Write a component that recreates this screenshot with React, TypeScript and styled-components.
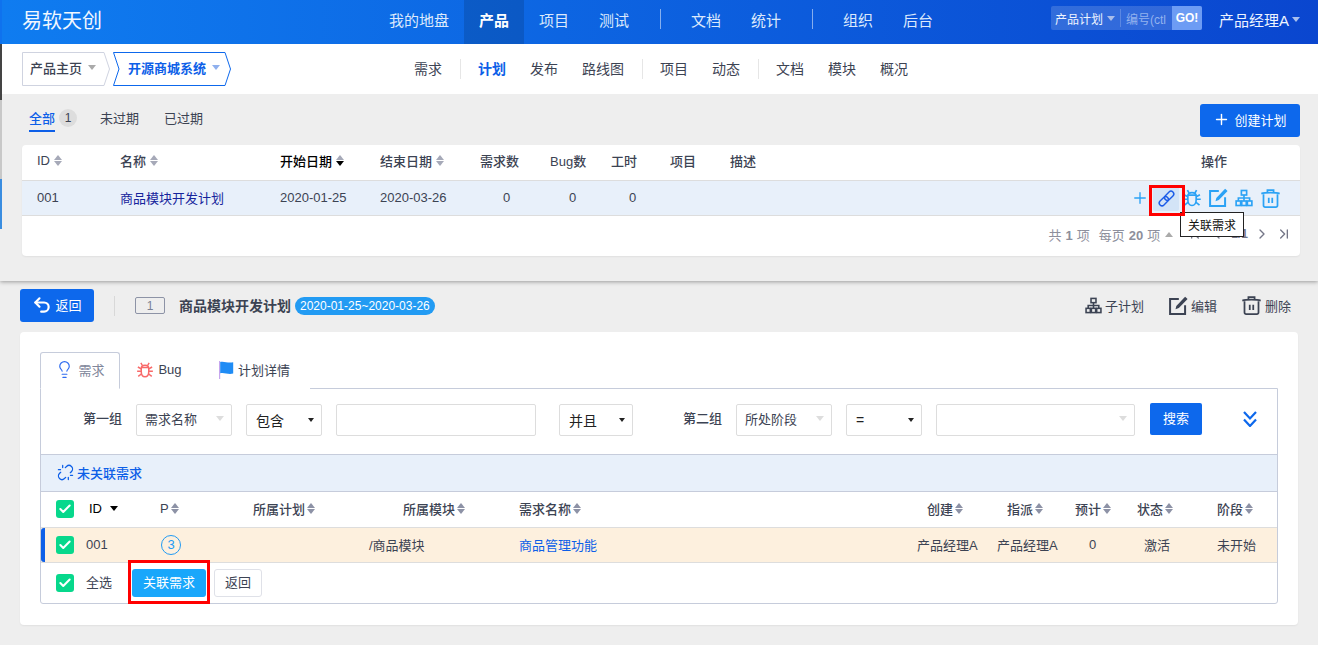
import React from 'react';
import styled, { createGlobalStyle } from 'styled-components';
import { Plus, Lightbulb, Undo2, Unlink, Check, ChevronFirst, ChevronLeft, ChevronRight, ChevronLast } from 'lucide-react';

const Global = createGlobalStyle`
  html, body { margin: 0; padding: 0; background: #eee; }
  body { font-family: "Liberation Sans", "Noto Sans CJK SC", sans-serif; font-size: 13px; color: #3c4353; }
  * { box-sizing: border-box; }
`;

const Page = styled.div`
  position: relative;
  width: 1318px;
  height: 645px;
  overflow: hidden;
  background: #eee;
`;
const Upper = styled.div`
  display: flex;
  height: 281px;
  box-shadow: 0 1px 4px rgba(0, 0, 0, .35);
  position: relative;
`;
const Strip = styled.div`
  width: 2px;
  flex: none;
  background: linear-gradient(#0f72ee 0 44px, #444 44px 100px, #c8c8c8 100px 179px, #3a8de0 179px 229px, #eee 229px);
`;
const UpperMain = styled.div`
  flex: 1;
  display: flex;
  flex-direction: column;
  min-width: 0;
`;
const Header = styled.header`
  height: 44px;
  flex: none;
  display: flex;
  align-items: center;
  background: linear-gradient(90deg, #0f7cf0, #0a46cf);
  color: #fff;
`;
const Logo = styled.div`
  width: 372px;
  padding: 0 0 6px 20px;
  font-size: 20px;
  color: #f2f7ff;
`;
const TopItem = styled.div<{ $active?: boolean; $w?: number }>`
  height: 44px;
  width: ${p => p.$w ?? 60}px;
  display: flex;
  align-items: center;
  justify-content: center;
  font-size: 15px;
  padding-bottom: 6px;
  font-weight: ${p => (p.$active ? 700 : 400)};
  color: ${p => (p.$active ? '#fff' : '#dce9fc')};
  background: ${p => (p.$active ? 'rgba(0,0,0,.13)' : 'transparent')};
`;
const TopSep = styled.span`
  width: 1px;
  height: 20px;
  background: rgba(255, 255, 255, .5);
  margin: 0 15px 6px 16px;
`;
const SearchBox = styled.div`
  margin: 0 0 8px 103px;
  width: 151px;
  height: 24px;
  display: flex;
  align-items: center;
  background: rgba(255, 255, 255, .16);
  border-radius: 2px;
  font-size: 12px;
  overflow: hidden;
`;
const SearchKind = styled.div`
  width: 70px;
  height: 18px;
  padding-left: 4px;
  display: flex;
  align-items: center;
  gap: 4px;
  color: #eef4ff;
  border-right: 1px solid rgba(255,255,255,.2);
  white-space: nowrap;
`;
const SearchHint = styled.div`
  width: 51px;
  padding-left: 5px;
  overflow: hidden;
  white-space: nowrap;
  color: #93b2ee;
`;
const GoButton = styled.div`
  width: 30px;
  height: 24px;
  display: flex;
  align-items: center;
  justify-content: center;
  background: #6d9cf4;
  color: #fff;
  font-size: 12px;
  font-weight: 700;
`;
const UserName = styled.div`
  margin: 0 0 6px 17px;
  font-size: 15px;
  display: flex;
  align-items: center;
  gap: 3px;
  color: #eef4ff;
  white-space: nowrap;
`;
const Caret = styled.i<{ $c?: string; $s?: number; $up?: boolean; $ml?: number; $mr?: number }>`
  display: inline-block;
  width: 0;
  height: 0;
  margin-left: ${p => p.$ml ?? 0}px;
  margin-right: ${p => p.$mr ?? 0}px;
  border-left: ${p => p.$s ?? 4}px solid transparent;
  border-right: ${p => p.$s ?? 4}px solid transparent;
  ${p => (p.$up ? 'border-bottom' : 'border-top')}: ${p => (p.$s ?? 4) + 1}px solid ${p => p.$c ?? '#999'};
`;
const SubBar = styled.div`
  height: 50px;
  flex: none;
  background: #fff;
  display: flex;
  align-items: center;
  padding-left: 20px;
`;
const Crumbs = styled.div`
  width: 368px;
  display: flex;
  align-items: center;
  gap: 3px;
`;
const Crumb = styled.div<{ $active?: boolean; $w: number }>`
  position: relative;
  width: ${p => p.$w}px;
  height: 34px;
  display: flex;
  align-items: center;
  gap: 6px;
  padding: 0 0 3px ${p => (p.$active ? 15 : 8)}px;
  font-size: 13px;
  font-weight: ${p => (p.$active ? 700 : 500)};
  white-space: nowrap;
  color: ${p => (p.$active ? '#0d5fe8' : '#3c4353')};
  svg { position: absolute; inset: 0; width: 100%; height: 100%; }
  span, i { position: relative; }
`;
const SubItem = styled.span<{ $active?: boolean }>`
  margin-left: 24px;
  font-size: 14px;
  padding-bottom: 2px;
  white-space: nowrap;
  color: ${p => (p.$active ? '#0d5fe8' : '#3c4353')};
  font-weight: ${p => (p.$active ? 700 : 400)};
`;
const SubSep = styled.i`
  width: 1px;
  height: 20px;
  background: #e6e6e6;
  margin: 0 -7px 0 18px;
`;
const UpperBody = styled.div`
  flex: 1;
  padding: 10px 18px 0 20px;
  display: flex;
  flex-direction: column;
  position: relative;
`;
const FilterBar = styled.div`
  height: 41px;
  display: flex;
  align-items: flex-start;
  justify-content: space-between;
`;
const Filters = styled.div`
  display: flex;
  align-items: center;
  padding-left: 7px;
  height: 28px;
`;
const Filter = styled.span<{ $active?: boolean }>`
  height: 28px;
  line-height: 29px;
  margin-right: ${p => (p.$active ? 4 : 25)}px;
  color: ${p => (p.$active ? '#0d5fe8' : '#3c4353')};
  ${p => p.$active && 'border-bottom: 2px solid #0d5fe8; font-weight: 500;'}
`;
const CountBadge = styled.span`
  width: 18px;
  height: 18px;
  margin: 0 23px 0 0;
  border-radius: 50%;
  background: #ddd;
  display: flex;
  align-items: center;
  justify-content: center;
  font-size: 12px;
`;
const PrimaryBtn = styled.button`
  display: flex;
  align-items: center;
  justify-content: center;
  gap: 4px;
  width: 100px;
  height: 33px;
  padding: 0 0 2px;
  border: 0;
  border-radius: 3px;
  background: #0d68ec;
  color: #fff;
  font: inherit;
  font-size: 13px;
`;
const Card = styled.div`
  background: #fff;
  border-radius: 4px;
  height: 111px;
  box-shadow: 0 1px 2px rgba(0,0,0,.06);
`;
const planCols = '98px 160px 100px 100px 70px 61px 59px 60px 471px 1fr';
const PlanHead = styled.div`
  display: grid;
  grid-template-columns: ${planCols};
  height: 36px;
  align-items: center;
  border-bottom: 1px solid #ddd;
  padding-bottom: 2px;
  font-weight: 500;
`;
const PlanRow = styled.div`
  display: grid;
  grid-template-columns: ${planCols};
  height: 35px;
  align-items: center;
  background: #e8f0fa;
  border-bottom: 1px solid #ddd;
`;
const PlanCell = styled.div<{ $pl?: number; $strong?: boolean; $link?: boolean }>`
  padding: 0 0 2px ${p => p.$pl ?? 0}px;
  display: flex;
  align-items: center;
  gap: 4px;
  white-space: nowrap;
  color: ${p => (p.$strong ? '#000' : p.$link ? '#16249c' : '#3c4353')};
`;
const Sort = styled.span<{ $down?: boolean; $dark?: boolean }>`
  display: inline-flex;
  flex-direction: column;
  gap: 1px;
  i {
    display: block;
    width: 0; height: 0;
    border-left: 4.5px solid transparent;
    border-right: 4.5px solid transparent;
  }
  i:first-child { border-bottom: 5px solid ${p => (p.$dark ? '#8d92a6' : '#a6a9b8')}; }
  i:last-child { border-top: 5px solid ${p => (p.$down ? '#000' : p.$dark ? '#8d92a6' : '#a6a9b8')}; }
`;
const RowActions = styled.div`
  display: flex;
  align-items: center;
  justify-content: flex-end;
  grid-column: 9 / span 2;
  padding-right: 17px;
  height: 34px;
`;
const ActionBox = styled.span<{ $on?: boolean }>`
  width: 26px;
  height: 26px;
  display: flex;
  align-items: center;
  justify-content: center;
  border-radius: 2px;
  background: ${p => (p.$on ? '#d3e4f7' : 'transparent')};
  color: ${p => (p.$on ? '#1c5de8' : '#2ba2f5')};
`;
const Pager = styled.div`
  height: 40px;
  padding: 0 8px 4px 0;
  display: flex;
  align-items: center;
  justify-content: flex-end;
  gap: 9px;
  color: #8d8f9c;
  b { color: #8d8f9c; margin: 0 4px; }
`;
const PagerIcons = styled.span`
  display: flex;
  align-items: center;
  gap: 6px;
  margin-left: -4px;
  color: #747687;
  font-weight: 700;
  font-size: 12px;
`;
const Tooltip = styled.div`
  position: absolute;
  left: 1178px;
  top: 118px;
  width: 64px;
  height: 25px;
  background: #fff;
  border: 1px solid #222;
  color: #111;
  font-size: 12px;
  display: flex;
  align-items: center;
  justify-content: center;
  z-index: 3;
`;
const RedBox = styled.div<{ $x: number; $y: number; $w: number; $h: number }>`
  position: absolute;
  left: ${p => p.$x}px;
  top: ${p => p.$y}px;
  width: ${p => p.$w}px;
  height: ${p => p.$h}px;
  border: 3px solid #f00;
  z-index: 4;
  pointer-events: none;
`;
const Lower = styled.div`
  padding: 8px 20px 0;
`;
const DetailBar = styled.div`
  height: 33px;
  margin-bottom: 10px;
  display: flex;
  align-items: center;
`;
const BackBtn = styled.button`
  width: 74px;
  height: 33px;
  border: 0;
  border-radius: 3px;
  background: #0d68ec;
  color: #fff;
  font: inherit;
  font-size: 13px;
  padding: 0 0 2px;
  display: flex;
  align-items: center;
  justify-content: center;
  gap: 3px;
`;
const VSep = styled.i`
  width: 1px;
  height: 20px;
  background: #d8d8d8;
  margin: 0 20px;
`;
const IdBox = styled.span`
  width: 30px;
  height: 17px;
  border: 1px solid #8d93a6;
  border-radius: 2px;
  display: flex;
  align-items: center;
  justify-content: center;
  font-size: 12px;
  color: #7a8094;
  margin-right: 14px;
`;
const PlanTitle = styled.span`
  font-weight: 700;
  font-size: 14px;
  margin-right: 4px;
  padding-bottom: 2px;
`;
const DatePill = styled.span`
  height: 18px;
  padding: 0 5px;
  line-height: 18px;
  border-radius: 9px;
  background: #229bf3;
  color: #fff;
  font-size: 12px;
`;
const DetailActions = styled.div`
  margin-left: auto;
  display: flex;
  align-items: center;
  gap: 24px;
  padding-right: 7px;
`;
const DetailAction = styled.span`
  display: flex;
  align-items: center;
  gap: 3px;
  font-size: 13px;
  color: #3c4353;
`;
const MainCard = styled.div`
  height: 293px;
  background: #fff;
  border-radius: 4px;
  padding: 20px 20px 0;
  box-shadow: 0 1px 2px rgba(0,0,0,.06);
`;
const Tabs = styled.div`
  display: flex;
  height: 37px;
  margin-bottom: -1px;
  position: relative;
`;
const Tab = styled.div<{ $active?: boolean; $w: number }>`
  width: ${p => p.$w}px;
  height: 37px;
  padding-bottom: 2px;
  display: flex;
  align-items: center;
  justify-content: center;
  gap: 4px;
  font-size: 13px;
  color: ${p => (p.$active ? '#80869a' : '#3c4353')};
  background: #fff;
  ${p => p.$active && 'border: 1px solid #c6ccdb; border-bottom-color: #fff; border-radius: 3px 3px 0 0;'}
`;
const TabBugIcon = styled.span`
  display: flex;
  color: #f86a6a;
`;
const Panel = styled.div`
  border: 1px solid #c6ccdb;
  border-radius: 0 0 3px 3px;
  height: 216px;
`;
const SearchRow = styled.div`
  height: 66px;
  display: flex;
  align-items: flex-start;
  padding-top: 15px;
  border-bottom: 1px solid #c6ccdb;
`;
const FieldLabel = styled.span<{ $ml: number }>`
  margin-left: ${p => p.$ml}px;
  margin-right: 14px;
  line-height: 30px;
  font-weight: 500;
`;
const Select = styled.div<{ $w: number; $ml?: number; $native?: boolean }>`
  width: ${p => p.$w}px;
  margin-left: ${p => p.$ml ?? 0}px;
  height: 32px;
  border: 1px solid #ddd;
  border-radius: 2px;
  padding: 0 7px ${p => (p.$native ? 0 : 3)}px ${p => (p.$native ? 9 : 8)}px;
  display: flex;
  align-items: center;
  justify-content: space-between;
  font-size: ${p => (p.$native ? 14 : 13)}px;
  color: ${p => (p.$native ? '#222' : '#3c4353')};
  background: #fff;
`;
const SearchBtn = styled.button`
  width: 52px;
  height: 32px;
  margin: -1px 0 0 15px;
  padding: 0 0 3px;
  border: 0;
  border-radius: 2px;
  background: #0d68ec;
  color: #fff;
  font: inherit;
  font-size: 13px;
`;
const More = styled.span`
  margin: 7px 0 0 41px;
  color: #0d68ec;
  display: flex;
`;
const Band = styled.div`
  height: 37px;
  background: #e8f0fa;
  border-bottom: 1px solid #c6ccdb;
  padding: 0 0 2px 16px;
  display: flex;
  align-items: center;
  gap: 3px;
  color: #0d5fe8;
  font-weight: 500;
`;
const storyCols = '48px 71px 93px 150px 116px 398px 80px 78px 62px 80px 1fr';
const StoryHead = styled.div`
  display: grid;
  grid-template-columns: ${storyCols};
  height: 36px;
  align-items: center;
  border-bottom: 1px solid #ddd;
  padding-bottom: 2px;
  font-weight: 500;
`;
const StoryRow = styled.div`
  position: relative;
  display: grid;
  grid-template-columns: ${storyCols};
  height: 35px;
  align-items: center;
  background: #fdf0de;
  border-bottom: 1px solid #ddd;
  &::before {
    content: '';
    position: absolute;
    left: 0; top: 0; bottom: 0;
    width: 4px;
    border-radius: 3px 0 0 3px;
    background: #0d5fe8;
  }
`;
const StoryCell = styled.div<{ $ml?: number; $link?: boolean; $strong?: boolean }>`
  margin-left: ${p => p.$ml ?? 0}px;
  padding-bottom: 1px;
  display: flex;
  align-items: center;
  gap: 2px;
  white-space: nowrap;
  color: ${p => (p.$link ? '#0d5fe8' : p.$strong ? '#000' : '#3c4353')};
`;
const Checkbox = styled.span`
  width: 18px;
  height: 18px;
  margin-left: 15px;
  border-radius: 3px;
  background: #07d88c;
  color: #fff;
  display: flex;
  align-items: center;
  justify-content: center;
  flex: none;
`;
const Pri = styled.span`
  width: 20px;
  height: 20px;
  margin-left: 1px;
  border: 1.5px solid #229bf3;
  border-radius: 50%;
  color: #229bf3;
  font-size: 13px;
  display: flex;
  align-items: center;
  justify-content: center;
`;
const StoryFoot = styled.div`
  height: 40px;
  display: flex;
  align-items: center;
`;
const AllLabel = styled.span`
  margin: 0 20px 0 12px;
  padding-bottom: 3px;
`;
const LinkBtn = styled.button`
  width: 74px;
  height: 28px;
  padding: 0 0 3px;
  border: 0;
  border-radius: 3px;
  background: #19a7fb;
  color: #fff;
  font: inherit;
`;
const GhostBtn = styled.button`
  width: 48px;
  height: 28px;
  padding: 0 0 3px;
  margin-left: 8px;
  border: 1px solid #dfe1e8;
  border-radius: 3px;
  background: #fff;
  color: #3c4353;
  font: inherit;
`;

const ChainGlyph = () => (
  <svg width="19" height="19" viewBox="0 0 24 24" fill="none" stroke="currentColor" strokeWidth="1.8">
    <g transform="rotate(-45 12 12)">
      <rect x="0.5" y="8.5" width="13.5" height="7" rx="3.5" />
      <rect x="10" y="8.5" width="13.5" height="7" rx="3.5" />
    </g>
  </svg>
);
const BugGlyph = ({ size = 20 }: { size?: number }) => (
  <svg width={size} height={size} viewBox="0 0 24 24" fill="none" stroke="currentColor" strokeWidth="2">
    <path d="M7 10c0-3 2-4.500 5-4.500s5 1.500 5 4.500v4c0 4-2 7-5 7s-5-3-5-7z" />
    <path d="M7 8.500h10M8.500 6 6.500 2.500M15.500 6l2-3.500M7 10.500 2.500 8M17 10.500 21.500 8M7 13.500H1.500M17 13.500h5.500M7.500 17 3 20.500M16.500 17l4.500 3.500" />
  </svg>
);
const EditGlyph = ({ size = 20 }: { size?: number }) => (
  <svg width={size} height={size} viewBox="0 0 24 24" fill="none" stroke="currentColor" strokeWidth="2.4">
    <path d="M13 3.500H2.500v18h18V11" />
    <path d="M20.500 1 23.500 3.500 13 14.500 9 16l1-4z" fill="currentColor" stroke="none" />
  </svg>
);
const OrgGlyph = ({ size = 18 }: { size?: number }) => (
  <svg width={size} height={size} viewBox="0 0 24 24" fill="none" stroke="currentColor" strokeWidth="2.2">
    <rect x="8.500" y="2" width="7" height="6" />
    <rect x="1.500" y="16" width="6" height="6" />
    <rect x="9" y="16" width="6" height="6" />
    <rect x="16.500" y="16" width="6" height="6" />
    <path d="M12 8v8M4.500 16v-4h15v4" />
  </svg>
);
const TrashGlyph = ({ size = 21 }: { size?: number }) => (
  <svg width={size} height={size} viewBox="0 0 24 24" fill="none" stroke="currentColor" strokeWidth="2">
    <path d="M1.500 6.500c4-1.500 17-1.500 21 0" />
    <path d="M8.500 5V2.500h7V5" />
    <path d="M4 7v13a1.800 1.800 0 0 0 1.800 1.800h12.400A1.800 1.800 0 0 0 20 20V7" />
    <path d="M10 11v6M14 11v6" />
  </svg>
);
const FlagGlyph = () => (
  <svg width="16" height="18" viewBox="0 0 16 18">
    <path d="M1 0h1.200v18H1z" fill="#c6a6ee" />
    <path d="M2.200 1c4-1 8 1.500 13 .200v11.300c-5 1.300-9-1.200-13-.200z" fill="#1f8cf5" />
  </svg>
);
const DoubleChevron = () => (
  <svg width="14" height="16" viewBox="0 0 14 16" fill="none" stroke="currentColor" strokeWidth="2.200">
    <path d="M1 1l6 6.500L13 1M1 8.500 7 15l6-6.500" />
  </svg>
);

const H = ({ t, down, strong, pl }: { t: string; down?: boolean; strong?: boolean; pl?: number }) => (
  <PlanCell $strong={strong} $pl={pl}>{t}<Sort $down={down}><i /><i /></Sort></PlanCell>
);
const SH = ({ t, caret, ml }: { t: string; caret?: boolean; ml?: number }) => (
  <StoryCell $ml={ml} $strong={caret}>
    {t}
    {caret ? <Caret $c="#000" $s={4} $ml={6} /> : <Sort $dark><i /><i /></Sort>}
  </StoryCell>
);

const CrumbShape = ({ w, c }: { w: number; c: string }) => (
  <svg viewBox={`0 0 ${w} 34`} fill="none">
    <path d={`M.5.5H${w - 6}L${w - 0.5} 17L${w - 6} 33.5H.5Z`} stroke={c} />
  </svg>
);
const CrumbActive = ({ w }: { w: number }) => (
  <svg viewBox={`0 0 ${w} 34`} fill="none">
    <path d={`M.5.5H${w - 6}L${w - 0.5} 17L${w - 6} 33.5H.5L6 17Z`} stroke="#0d68ec" />
  </svg>
);

export default function App() {
  return (
    <Page>
      <Global />
      <Upper>
        <Strip />
        <UpperMain>
          <Header>
            <Logo>易软天创</Logo>
            <TopItem $w={90}>我的地盘</TopItem>
            <TopItem $active>产品</TopItem>
            <TopItem>项目</TopItem>
            <TopItem>测试</TopItem>
            <TopSep />
            <TopItem>文档</TopItem>
            <TopItem>统计</TopItem>
            <TopSep />
            <TopItem>组织</TopItem>
            <TopItem>后台</TopItem>
            <SearchBox>
              <SearchKind>产品计划<Caret $c="#a9bdea" /></SearchKind>
              <SearchHint>编号(ctl</SearchHint>
              <GoButton>GO!</GoButton>
            </SearchBox>
            <UserName>产品经理A<Caret $c="#a9c0ee" /></UserName>
          </Header>
          <SubBar>
            <Crumbs>
              <Crumb $w={88}>
                <CrumbShape w={88} c="#cfd3e0" />
                <span>产品主页</span><Caret $c="#aaa" />
              </Crumb>
              <Crumb $w={118} $active>
                <CrumbActive w={118} />
                <span>开源商城系统</span><Caret $c="#8fb0ee" />
              </Crumb>
            </Crumbs>
            <SubItem>需求</SubItem>
            <SubSep />
            <SubItem $active>计划</SubItem>
            <SubItem>发布</SubItem>
            <SubItem>路线图</SubItem>
            <SubSep />
            <SubItem>项目</SubItem>
            <SubItem>动态</SubItem>
            <SubSep />
            <SubItem>文档</SubItem>
            <SubItem>模块</SubItem>
            <SubItem>概况</SubItem>
          </SubBar>
          <UpperBody>
            <FilterBar>
              <Filters>
                <Filter $active>全部</Filter>
                <CountBadge>1</CountBadge>
                <Filter>未过期</Filter>
                <Filter>已过期</Filter>
              </Filters>
              <PrimaryBtn><Plus size={17} strokeWidth={2} />创建计划</PrimaryBtn>
            </FilterBar>
            <Card>
              <PlanHead>
                <H t="ID" pl={15} />
                <H t="名称" />
                <H t="开始日期" down strong />
                <H t="结束日期" />
                <PlanCell>需求数</PlanCell>
                <PlanCell>Bug数</PlanCell>
                <PlanCell>工时</PlanCell>
                <PlanCell>项目</PlanCell>
                <PlanCell>描述</PlanCell>
                <PlanCell>操作</PlanCell>
              </PlanHead>
              <PlanRow>
                <PlanCell $pl={15}>001</PlanCell>
                <PlanCell $link>商品模块开发计划</PlanCell>
                <PlanCell>2020-01-25</PlanCell>
                <PlanCell>2020-03-26</PlanCell>
                <PlanCell $pl={23}>0</PlanCell>
                <PlanCell $pl={19}>0</PlanCell>
                <PlanCell $pl={18}>0</PlanCell>
                <RowActions>
                  <ActionBox><Plus size={18} strokeWidth={1.8} /></ActionBox>
                  <ActionBox $on><ChainGlyph /></ActionBox>
                  <ActionBox><BugGlyph /></ActionBox>
                  <ActionBox><EditGlyph /></ActionBox>
                  <ActionBox><OrgGlyph /></ActionBox>
                  <ActionBox><TrashGlyph /></ActionBox>
                </RowActions>
              </PlanRow>
              <Pager>
                <span>共<b>1</b>项</span>
                <span>每页<b>20</b>项</span>
                <PagerIcons>
                  <Caret $up $c="#aaa" $mr={8} />
                  <ChevronFirst size={16} />
                  <ChevronLeft size={16} />
                  <span>1/1</span>
                  <ChevronRight size={16} />
                  <ChevronLast size={16} />
                </PagerIcons>
              </Pager>
            </Card>
            <Tooltip>关联需求</Tooltip>
          </UpperBody>
        </UpperMain>
      </Upper>
      <RedBox $x={1149} $y={185} $w={36} $h={31} />
      <RedBox $x={128} $y={560} $w={82} $h={44} />
      <Lower>
        <DetailBar>
          <BackBtn><Undo2 size={20} strokeWidth={2.6} />返回</BackBtn>
          <VSep />
          <IdBox>1</IdBox>
          <PlanTitle>商品模块开发计划</PlanTitle>
          <DatePill>2020-01-25~2020-03-26</DatePill>
          <DetailActions>
            <DetailAction><OrgGlyph size={17} />子计划</DetailAction>
            <DetailAction><EditGlyph size={20} />编辑</DetailAction>
            <DetailAction><TrashGlyph size={21} />删除</DetailAction>
          </DetailActions>
        </DetailBar>
        <MainCard>
          <Tabs>
            <Tab $active $w={80}><Lightbulb size={19} strokeWidth={1.5} color="#2f6cf0" />需求</Tab>
            <Tab $w={78}><TabBugIcon><BugGlyph size={18} /></TabBugIcon>Bug</Tab>
            <Tab $w={112}><FlagGlyph />计划详情</Tab>
          </Tabs>
          <Panel>
            <SearchRow>
              <FieldLabel $ml={42}>第一组</FieldLabel>
              <Select $w={96}>需求名称<Caret $c="#ddd" /></Select>
              <Select $w={76} $ml={14} $native>包含<Caret $c="#222" $s={3} /></Select>
              <Select $w={200} $ml={14} />
              <Select $w={74} $ml={23} $native>并且<Caret $c="#222" $s={3} /></Select>
              <FieldLabel $ml={50}>第二组</FieldLabel>
              <Select $w={96}>所处阶段<Caret $c="#ddd" /></Select>
              <Select $w={76} $ml={14} $native>=<Caret $c="#222" $s={3} /></Select>
              <Select $w={199} $ml={14}><span /><Caret $c="#ddd" /></Select>
              <SearchBtn>搜索</SearchBtn>
              <More><DoubleChevron /></More>
            </SearchRow>
            <Band><Unlink size={17} strokeWidth={1.8} />未关联需求</Band>
            <StoryHead>
              <Checkbox><Check size={14} strokeWidth={3.5} /></Checkbox>
              <SH t="ID" caret />
              <SH t="P" />
              <SH t="所属计划" />
              <SH t="所属模块" />
              <SH t="需求名称" />
              <SH t="创建" ml={10} />
              <SH t="指派" ml={10} />
              <SH t="预计" />
              <SH t="状态" />
              <SH t="阶段" />
            </StoryHead>
            <StoryRow>
              <Checkbox><Check size={14} strokeWidth={3.5} /></Checkbox>
              <StoryCell $ml={-3}>001</StoryCell>
              <StoryCell><Pri>3</Pri></StoryCell>
              <StoryCell />
              <StoryCell $ml={-34}>/商品模块</StoryCell>
              <StoryCell $link>商品管理功能</StoryCell>
              <StoryCell>产品经理A</StoryCell>
              <StoryCell>产品经理A</StoryCell>
              <StoryCell $ml={14}>0</StoryCell>
              <StoryCell $ml={7}>激活</StoryCell>
              <StoryCell>未开始</StoryCell>
            </StoryRow>
            <StoryFoot>
              <Checkbox><Check size={14} strokeWidth={3.5} /></Checkbox>
              <AllLabel>全选</AllLabel>
              <LinkBtn>关联需求</LinkBtn>
              <GhostBtn>返回</GhostBtn>
            </StoryFoot>
          </Panel>
        </MainCard>
      </Lower>
    </Page>
  );
}
